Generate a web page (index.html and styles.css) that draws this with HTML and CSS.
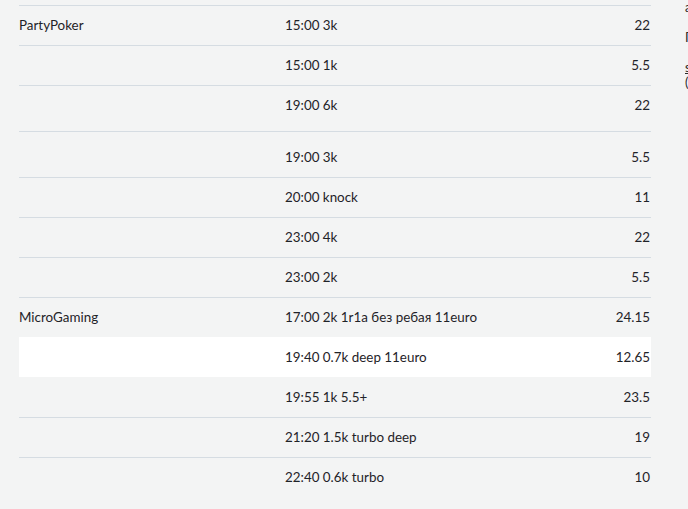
FILE: index.html
```html
<!DOCTYPE html>
<html lang="ru">
<head>
<meta charset="utf-8">
<title>Турниры</title>
<link rel="stylesheet" href="styles.css">
</head>
<body>
<div class="page">
  <main class="content">
    <div class="table">
      <div class="row"><div class="room">PartyPoker</div><div class="name">15:00 3k</div><div class="buyin">22</div></div>
      <div class="row"><div class="room"></div><div class="name">15:00 1k</div><div class="buyin">5.5</div></div>
      <div class="row tall-bottom"><div class="room"></div><div class="name">19:00 6k</div><div class="buyin">22</div></div>
      <div class="row tall-top"><div class="room"></div><div class="name">19:00 3k</div><div class="buyin">5.5</div></div>
      <div class="row"><div class="room"></div><div class="name">20:00 knock</div><div class="buyin">11</div></div>
      <div class="row"><div class="room"></div><div class="name">23:00 4k</div><div class="buyin">22</div></div>
      <div class="row"><div class="room"></div><div class="name">23:00 2k</div><div class="buyin">5.5</div></div>
      <div class="row"><div class="room">MicroGaming</div><div class="name">17:00 2k 1r1a без ребая 11euro</div><div class="buyin">24.15</div></div>
      <div class="row hover"><div class="room"></div><div class="name">19:40 0.7k deep 11euro</div><div class="buyin">12.65</div></div>
      <div class="row noline"><div class="room"></div><div class="name">19:55 1k 5.5+</div><div class="buyin">23.5</div></div>
      <div class="row"><div class="room"></div><div class="name">21:20 1.5k turbo deep</div><div class="buyin">19</div></div>
      <div class="row"><div class="room"></div><div class="name">22:40 0.6k turbo</div><div class="buyin">10</div></div>
    </div>
  </main>
  <aside class="side">
    <p class="s1">а</p>
    <p class="s2">П</p>
    <p class="s3"><u>s</u><br>(</p>
  </aside>
</div>
</body>
</html>
```
FILE: styles.css
```css
html, body {
  margin: 0;
  padding: 0;
  background: #f3f4f4;
  overflow: hidden;
}
body {
  font-family: "Lato", "Liberation Sans", sans-serif;
  font-size: 13.4px;
  color: #1f2328;
}
.page {
  display: flex;
  width: 688px;
  height: 509px;
  overflow: hidden;
}
.content {
  flex: 0 0 651px;
  padding: 5px 0 0 19px;
  box-sizing: border-box;
}
.table {
  display: flex;
  flex-direction: column;
}
.row {
  display: grid;
  grid-template-columns: 266px 1fr auto;
  align-items: center;
  height: 40px;
  box-sizing: border-box;
  border-top: 1px solid #d5dce2;
  padding-bottom: 1px;
}
.row.tall-bottom {
  height: 46px;
  padding-bottom: 7px;
}
.row.tall-top {
  height: 46px;
  padding-top: 6px;
}
.row.hover {
  background: #ffffff;
  border-top-color: #ffffff;
}
.row.noline {
  border-top-color: transparent;
}
.buyin {
  text-align: right;
  padding-right: 1px;
}
.side {
  flex: 0 0 40px;
  margin-left: 34px;
  font-size: 13px;
  color: #2a2a2a;
}
.side p {
  margin: 0;
  line-height: 15px;
}
.s2, .s3 {
  padding-top: 15px;
}
```
